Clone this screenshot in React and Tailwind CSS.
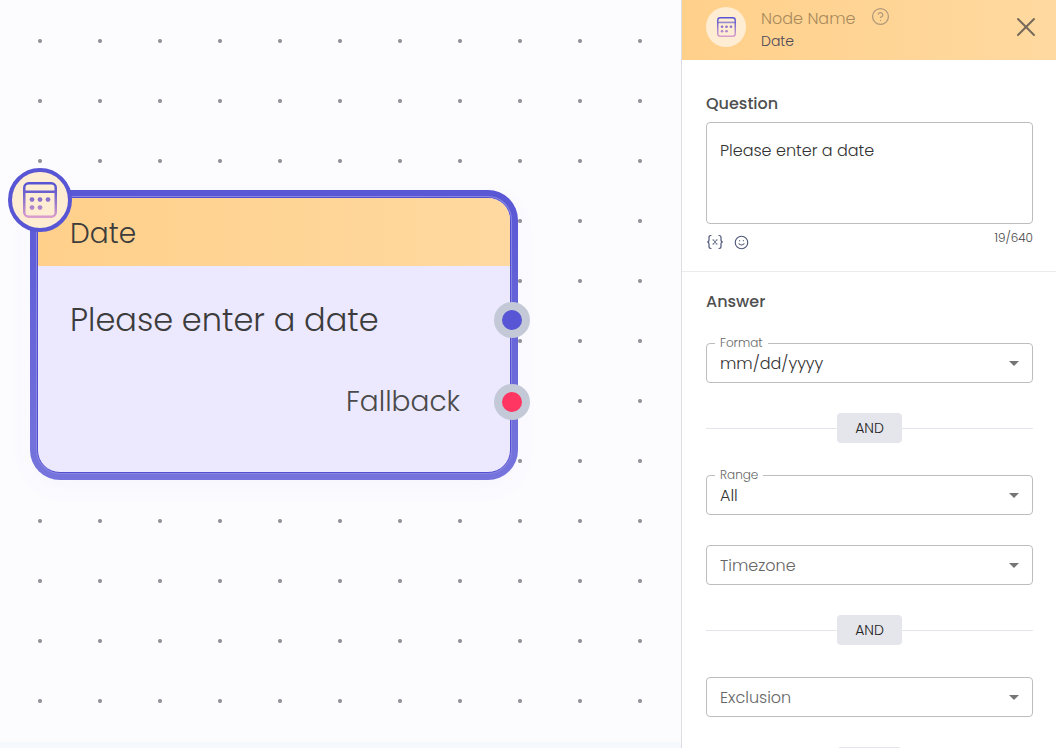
import React, { useState } from 'react';
import { CircleHelp, Smile, X } from 'lucide-react';

const MAX_LENGTH = 640;

const DateIcon = ({ id, className }) => (
    <svg viewBox="0 0 34 36" fill="none" className={className} aria-hidden="true">
        <defs>
            <linearGradient id={id} gradientUnits="userSpaceOnUse" x1="17" y1="0" x2="17" y2="36">
                <stop offset="0" stopColor="#5552d4" />
                <stop offset="0.3" stopColor="#6a60cf" />
                <stop offset="1" stopColor="#dfa0cb" />
            </linearGradient>
        </defs>
        <rect x="1.25" y="1.25" width="31.5" height="33.5" rx="4.5" stroke={`url(#${id})`} strokeWidth="2.5" />
        <path d="M1.5 9.2h31v1.2h-31z" stroke={`url(#${id})`} strokeWidth="1.2" />
        <g fill={`url(#${id})`}>
            <circle cx="9" cy="17.6" r="2.4" />
            <circle cx="17" cy="17.6" r="2.4" />
            <circle cx="25" cy="17.6" r="2.4" />
            <circle cx="9" cy="25.6" r="2.4" />
            <circle cx="17" cy="25.6" r="2.4" />
        </g>
    </svg>
);

const VariableIcon = () => (
    <svg viewBox="0 0 18 16" width="18" height="16" fill="none" stroke="currentColor" strokeLinecap="round" aria-hidden="true">
        <path strokeWidth="1.2" d="M5 1.5c-1.6 0-2 .7-2 1.9v2.4C3 7.2 2.5 8 1.2 8c1.3 0 1.8.8 1.8 2.2v2.4c0 1.2.4 1.9 2 1.9" />
        <path strokeWidth="1.2" d="M13 1.5c1.6 0 2 .7 2 1.9v2.4c0 1.400.5 2.200 1.800 2.200-1.300 0-1.800.8-1.800 2.200v2.400c0 1.200-.4 1.900-2 1.900" />
        <path strokeWidth="0.8" d="M7.400 6l3.200 4M10.600 6l-3.200 4M7 6h.8M10.200 6h.8M7 10h.8M10.200 10h.8" />
    </svg>
);

const Handle = ({ label, className }) => (
    <button
        type="button"
        aria-label={label}
        className="absolute top-0 -right-5 flex size-9 items-center justify-center rounded-full bg-[#c4c9d7]"
    >
        <span className={`size-5 rounded-full ${className}`}></span>
    </button>
);

const DateNode = ({ question }) => (
    <div className="absolute top-[190px] left-[30px] w-[488px] rounded-[30px] bg-linear-to-b from-[#5a57d5] to-[#7674dc] p-[7px] shadow-[0_8px_24px_rgba(90,87,213,0.04)]">
        <div className="rounded-[23px] border border-[#5350d0] bg-[#ece9ff] ring-1 ring-[#8886e2]">
            <div className="flex h-[68px] items-center rounded-t-[22px] bg-linear-to-r from-[#ffd08a] to-[#ffd9a0] px-8 pt-1 text-[28px] font-light text-[#3c3c3c]">
                Date
            </div>
            <div className="pt-9 pb-[52px]">
                <div className="relative flex h-9 items-center pl-8 text-[32px] font-light text-[#3c3c3c]">
                    {question}
                    <Handle label="Connect answer" className="bg-[#5856d4]" />
                </div>
                <div className="relative mt-[46px] flex h-9 items-center justify-end pr-[50px] text-[28px] font-light text-[#4a4a4a]">
                    Fallback
                    <Handle label="Connect fallback" className="bg-[#ff3562]" />
                </div>
            </div>
        </div>
        <div className="absolute -top-[22px] -left-[22px] flex size-16 items-center justify-center rounded-full border-4 border-[#5856d4] bg-[#ffedd3]">
            <DateIcon id="node-date" className="h-9 w-[34px]" />
        </div>
    </div>
);

// an empty select shows its label inside the box, a filled one shows it on the border
const SelectField = ({ id, label, options, initial = '' }) => {
    const [value, setValue] = useState(initial);

    return (
        <div className="relative h-10">
            <select
                id={id}
                value={value}
                onChange={(e) => setValue(e.target.value)}
                className="h-full w-full appearance-none rounded border border-[#bdbdbd] bg-transparent px-[13px] pt-0.5 text-base font-light text-[#333333] focus:outline-none"
            >
                <option value=""></option>
                {options.map((option) => (
                    <option key={option}>{option}</option>
                ))}
            </select>
            <label
                htmlFor={id}
                className={
                    value
                        ? 'absolute -top-2 left-[9px] bg-white px-[5px] text-xs leading-4 font-light text-[#666666]'
                        : 'pointer-events-none absolute top-2 left-3.5 text-base leading-[26px] font-light text-[#666666]'
                }
            >
                {label}
            </label>
            <svg viewBox="0 0 10 5" className="pointer-events-none absolute top-[18px] right-[14px] h-[5px] w-[10px] fill-[#757575]" aria-hidden="true">
                <path d="M0 0h10L5 5z" />
            </svg>
        </div>
    );
};

const AndDivider = () => (
    <div className="mb-0.5 flex items-center">
        <span className="h-px flex-1 bg-[#e4e5ea]"></span>
        <span className="flex h-[30px] w-[65px] items-center justify-center rounded bg-[#e5e6eb] text-sm font-light text-[#222222]">AND</span>
        <span className="h-px flex-1 bg-[#e4e5ea]"></span>
    </div>
);

const App = () => {
    const [question, setQuestion] = useState('Please enter a date');
    const [nodeName, setNodeName] = useState('Date');

    return (
        <div className="flex h-screen overflow-hidden bg-[#fcfcff] font-['Poppins','Inter',sans-serif]">
            <main className="flex min-w-0 flex-1 flex-col">
                <div className="relative flex-1 overflow-hidden bg-[radial-gradient(circle_at_center,#92929a_1.5px,transparent_2.5px)] bg-[size:60px_60px] bg-[position:10px_11px]">
                    <DateNode question={question} />
                </div>
                <div className="h-1.5 bg-[#f5f9fd]"></div>
            </main>

            <aside className="flex w-[375px] shrink-0 flex-col overflow-hidden border-l border-[#dedee2] bg-white">
                <header className="flex h-[60px] shrink-0 items-start bg-linear-to-r from-[#ffd08a] to-[#ffd9a0] pt-[7px] pr-3.5 pl-6">
                    <span className="flex size-10 items-center justify-center rounded-full bg-[#ffedd3]">
                        <DateIcon id="panel-date" className="h-5 w-[19px]" />
                    </span>
                    <div className="ml-[15px] flex-1">
                        <div className="flex items-start gap-4">
                            <label htmlFor="node-name" className="text-base font-light text-[#a98a5c]">Node Name</label>
                            <button type="button" aria-label="Help" className="text-[#b0987a]">
                                <CircleHelp size={19} strokeWidth={1.6} />
                            </button>
                        </div>
                        <input
                            id="node-name"
                            value={nodeName}
                            onChange={(e) => setNodeName(e.target.value)}
                            className="block h-5 w-full bg-transparent text-sm font-light text-[#4c4858] focus:outline-none"
                        />
                    </div>
                    <button type="button" aria-label="Close" className="mt-1 text-[#75695a]">
                        <X size={32} strokeWidth={1.5} />
                    </button>
                </header>

                <section className="shrink-0 border-b border-[#ececee] pt-8 pr-[23px] pl-6">
                    <label htmlFor="question" className="block h-6 text-base leading-6 font-medium text-[#4f4f4f]">Question</label>
                    <textarea
                        id="question"
                        value={question}
                        maxLength={MAX_LENGTH}
                        onChange={(e) => setQuestion(e.target.value)}
                        className="mt-1.5 block h-[102px] w-full resize-none rounded border border-[#bdbdbd] px-[13px] py-4 text-base font-light text-[#333333] focus:outline-none"
                    />
                    <div className="flex h-[47px] items-start justify-between pt-1.5">
                        <div className="flex items-center gap-2.5 pt-1 text-[#4f5679]">
                            <button type="button" aria-label="Insert variable">
                                <VariableIcon />
                            </button>
                            <button type="button" aria-label="Insert emoji">
                                <Smile size={15} strokeWidth={1.8} />
                            </button>
                        </div>
                        <span className="text-xs leading-4 font-light text-[#444444]">
                            {question.length}/{MAX_LENGTH}
                        </span>
                    </div>
                </section>

                <section className="flex flex-col gap-[30px] pt-[17px] pr-[23px] pl-6">
                    <h2 className="h-6 text-base leading-[26px] font-medium text-[#4f4f4f]">Answer</h2>
                    <SelectField id="format" label="Format" initial="mm/dd/yyyy" options={['mm/dd/yyyy', 'dd/mm/yyyy', 'yyyy/mm/dd']} />
                    <AndDivider />
                    <SelectField id="range" label="Range" initial="All" options={['All', 'Past', 'Future']} />
                    <SelectField id="timezone" label="Timezone" options={['UTC', 'GMT']} />
                    <AndDivider />
                    <SelectField id="exclusion" label="Exclusion" options={['Weekends', 'Weekdays']} />
                    <AndDivider />
                </section>
            </aside>
        </div>
    );
};

export default App;
